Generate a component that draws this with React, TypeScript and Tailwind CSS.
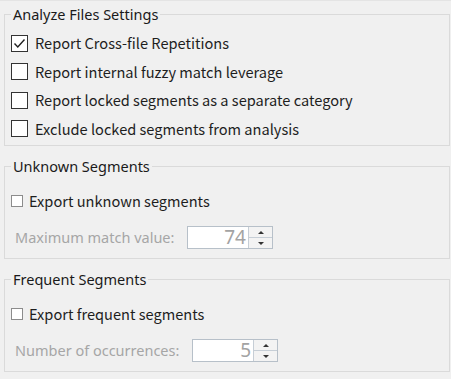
import React from "react";

function Check({ checked, small }: { checked?: boolean; small?: boolean }) {
  if (small) {
    return <span className="h-[12px] w-[12px] shrink-0 border border-[#8c8c8c] bg-white" />;
  }
  return (
    <span className="flex h-[17px] w-[17px] shrink-0 items-center justify-center border border-[#333333] bg-white">
      {checked && (
        <svg width="13" height="11" viewBox="0 0 13 11" fill="none">
          <path d="M1.5 5.5 L4.8 9 L11.5 1.5" stroke="#1f1f1f" strokeWidth="1.4" />
        </svg>
      )}
    </span>
  );
}

function Spin({ value }: { value: string }) {
  return (
    <div className="flex h-[23px] w-[86px] border border-[#b7c0c9] bg-white">
      <div className="flex-1 pr-[2px] text-right font-['Noto_Sans','Liberation_Sans',sans-serif] text-[19px] leading-[21px] text-[#a3a3a3]">
        {value}
      </div>
      <div className="flex w-[24px] flex-col border-l border-[#c6ced6] bg-[#f3f3f3]">
        <div className="flex flex-1 items-center justify-center border-b border-[#c6ced6]">
          <svg width="6" height="3" viewBox="0 0 6 3">
            <path d="M0 3 L3 0 L6 3 Z" fill="#333" />
          </svg>
        </div>
        <div className="flex flex-1 items-center justify-center">
          <svg width="6" height="3" viewBox="0 0 6 3">
            <path d="M0 0 L6 0 L3 3 Z" fill="#333" />
          </svg>
        </div>
      </div>
    </div>
  );
}

function Group({ title, children, className }: { title: string; children: React.ReactNode; className?: string }) {
  return (
    <fieldset className={"ml-[4px] mr-[1px] border border-[#dadada] pl-[6px] " + (className ?? "")}>
      <legend className="px-[2px] font-['Noto_Sans','Liberation_Sans',sans-serif] text-[14.5px] leading-[20px] text-[#1a1a1a]">
        {title}
      </legend>
      {children}
    </fieldset>
  );
}

const rowText = "font-['Noto_Sans_CJK_JP','Noto_Sans',sans-serif] text-[14.6px] text-[#1e1e1e]";
const dimText = "pl-[4px] font-['Noto_Sans','Liberation_Sans',sans-serif] text-[14.5px] text-[#a6a6a6]";

export default function App() {
  const main = [
    { label: "Report Cross-file Repetitions", checked: true },
    { label: "Report internal fuzzy match leverage" },
    { label: "Report locked segments as a separate category" },
    { label: "Exclude locked segments from analysis" },
  ];
  return (
    <div className="h-[379px] w-[451px] overflow-hidden border-t border-[#e4e4e4] bg-[#f0f0f0] pt-[3px]">
      <Group title="Analyze Files Settings" className="pb-[2px]">
        <div className="mt-[5px] flex flex-col">
          {main.map((m) => (
            <div key={m.label} className="flex h-[28.5px] items-center gap-[7px]">
              <Check checked={m.checked} />
              <span className={rowText}>{m.label}</span>
            </div>
          ))}
        </div>
      </Group>

      <Group title="Unknown Segments" className="mt-[10px] pb-[9px]">
        <div className="mt-[10px] flex h-[30px] items-center gap-[6px]">
          <Check small />
          <span className={rowText}>Export unknown segments</span>
        </div>
        <div className="mt-[10px] flex items-center">
          <span className={"w-[176px] " + dimText}>Maximum match value:</span>
          <Spin value="74" />
        </div>
      </Group>

      <Group title="Frequent Segments" className="mt-[10px] pb-[9px]">
        <div className="mt-[10px] flex h-[30px] items-center gap-[6px]">
          <Check small />
          <span className={rowText}>Export frequent segments</span>
        </div>
        <div className="mt-[10px] flex items-center">
          <span className={"w-[181px] " + dimText}>Number of occurrences:</span>
          <Spin value="5" />
        </div>
      </Group>
    </div>
  );
}
